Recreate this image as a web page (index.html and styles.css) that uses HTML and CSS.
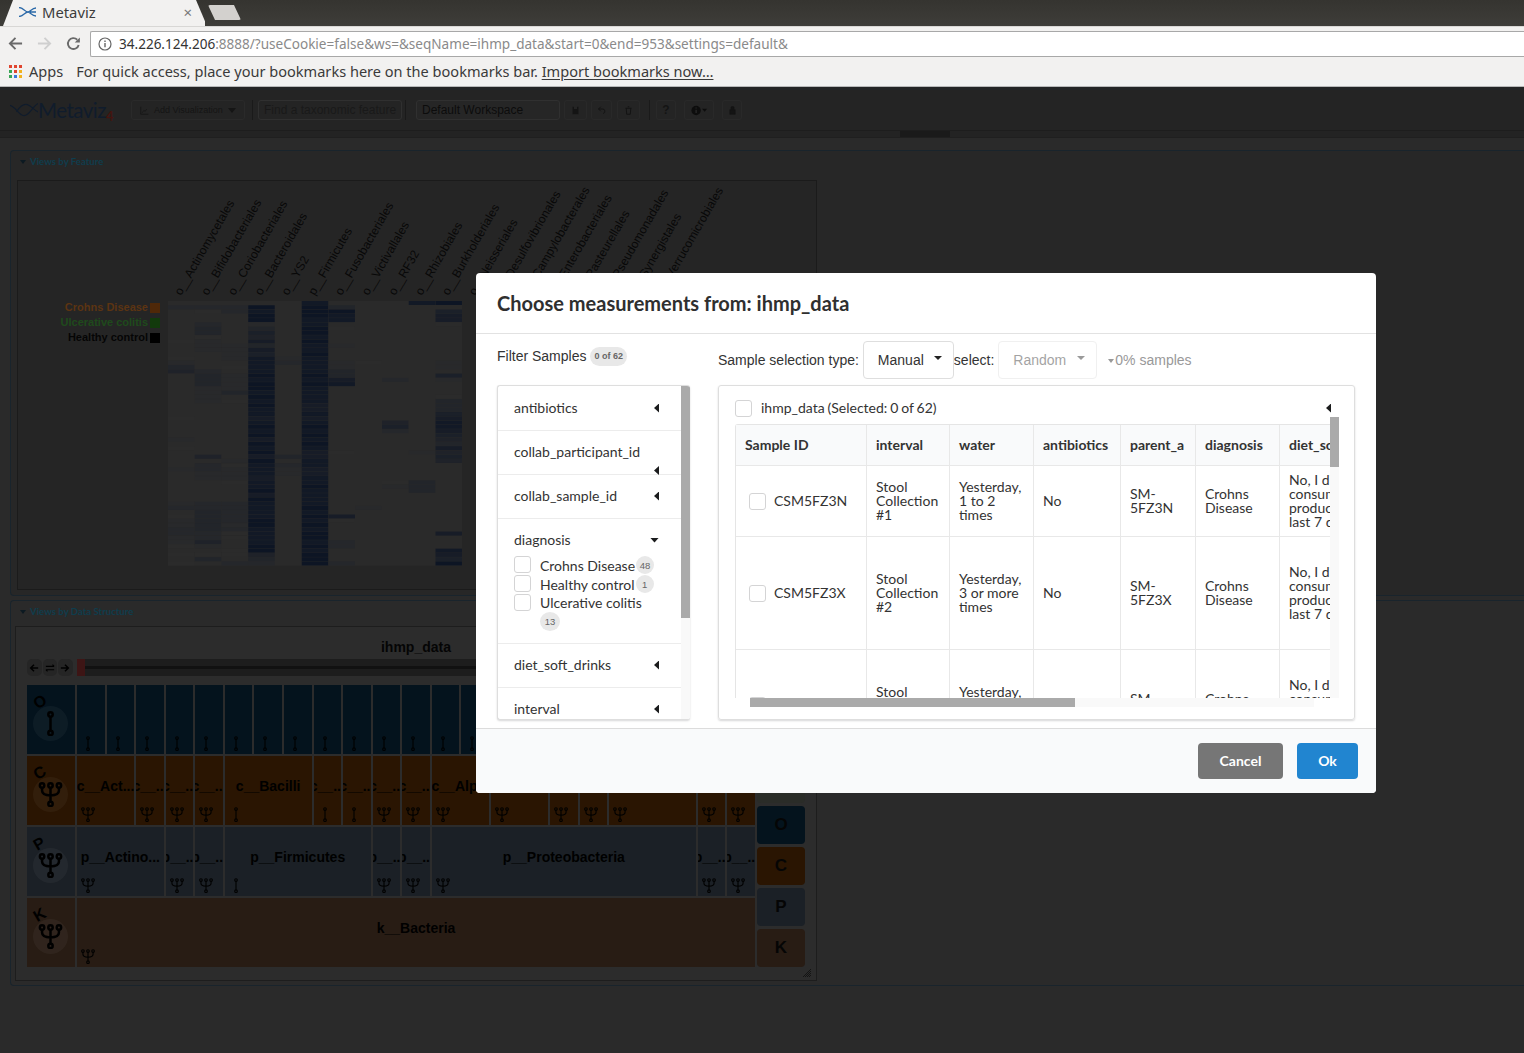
FILE: index.html
```html
<!DOCTYPE html>
<html lang="en">
<head>
<meta charset="utf-8">
<title>Metaviz</title>
<link rel="stylesheet" href="styles.css">
</head>
<body>
<svg class="defs" width="0" height="0" aria-hidden="true">
  <symbol id="psi" viewBox="0 0 16 16">
    <g fill="none" stroke="currentColor">
      <circle cx="2.6" cy="2.2" r="1.4"/><circle cx="8" cy="2.2" r="1.4"/><circle cx="13.4" cy="2.2" r="1.4"/><circle cx="8" cy="14" r="1.4"/>
      <path d="M8 3.6V12.6M2.6 3.6V5.5Q2.6 8.6 8 8.6Q13.4 8.6 13.4 5.5V3.6"/>
    </g>
  </symbol>
  <symbol id="bar" viewBox="0 0 16 16">
    <g fill="none" stroke="currentColor">
      <circle cx="8" cy="2.2" r="1.4"/><circle cx="8" cy="14" r="1.4"/><path d="M8 3.6V12.6"/>
    </g>
  </symbol>
</svg>

<header class="chrome">
  <div class="tabstrip">
    <div class="tab">
      <svg class="favicon" viewBox="0 0 18 10"><path d="M0 .5C4 .5 6 5 9 5C6 5 4 9.500 0 9.500M17 1C13 1 11 5 9 5C11 5 13 9 17 9M11 5H17" fill="none" stroke="#2b69a8" stroke-width="1.300"/></svg>
      <span class="tab-title">Metaviz</span>
      <span class="tab-close">×</span>
    </div>
    <div class="newtab"></div>
  </div>
  <div class="toolbar">
    <svg class="nav-ic" viewBox="0 0 16 16"><path d="M15 8H2M8 2L2 8l6 6" fill="none" stroke="#6a6a6a" stroke-width="2"/></svg>
    <svg class="nav-ic" viewBox="0 0 16 16"><path d="M1 8H14M8 2l6 6-6 6" fill="none" stroke="#cfcfcf" stroke-width="2"/></svg>
    <svg class="nav-ic" viewBox="0 0 16 16"><path d="M13.500 9.500A5.800 5.800 0 1 1 12 4" fill="none" stroke="#6a6a6a" stroke-width="2"/><path d="M14.800 1.500V7H9.300z" fill="#6a6a6a"/></svg>
    <div class="omnibox">
      <svg class="info" viewBox="0 0 14 14"><circle cx="7" cy="7" r="6" fill="none" stroke="#666" stroke-width="1.200"/><path d="M7 6v4.200M7 3.600v1.300" stroke="#666" stroke-width="1.400"/></svg>
      <span class="url"><b>34.226.124.206</b>:8888/?useCookie=false&amp;ws=&amp;seqName=ihmp_data&amp;start=0&amp;end=953&amp;settings=default&amp;</span>
    </div>
  </div>
  <div class="bookmarks">
    <svg class="apps" viewBox="0 0 13 13">
      <path fill="#e0452f" d="M0 0h3v3H0zM5 0h3v3H5zM10 0h3v3h-3z"/>
      <path fill="#3aa655" d="M0 5h3v3H0z"/><path fill="#e0452f" d="M5 5h3v3H5z"/><path fill="#f2b21c" d="M10 5h3v3h-3z"/>
      <path fill="#3aa655" d="M0 10h3v3H0z"/><path fill="#3a78d8" d="M5 10h3v3H5z"/><path fill="#f2b21c" d="M10 10h3v3h-3z"/>
    </svg>
    <span class="apps-label">Apps</span>
    <span class="bm-msg">For quick access, place your bookmarks here on the bookmarks bar. <u>Import bookmarks now…</u></span>
  </div>
</header>

<main class="app">
  <div class="app-header">
    <div class="logo">
      <svg class="logo-wave" viewBox="0 0 30 16"><path d="M0 3C7 5 9 14 15 14C21 14 24 4 30 1M7 10C10 5 14 2 17 2C22 2 25 8 30 10" fill="none" stroke="#101c2c" stroke-width="1.300"/></svg>
      <span class="logo-text">Metaviz</span><span class="logo-sub">4</span>
    </div>
    <div class="hbtn addviz">
      <svg class="hic" viewBox="0 0 12 12"><path d="M1 1v10h10M3 9l2-3 2 1 2-3" fill="none" stroke="#141414"/></svg>
      <span>Add Visualization</span><i class="hcaret"></i>
    </div>
    <i class="hsep first"></i>
    <div class="hinput">Find a taxonomic feature</div>
    <i class="hsep second"></i>
    <div class="hinput ws">Default Workspace</div>
    <div class="ibtn b1"><svg viewBox="0 0 12 12"><path d="M2 1h8v10H2zM4 1v3h4V1" fill="#141414"/></svg></div>
    <div class="ibtn b2"><svg viewBox="0 0 12 12"><path d="M5 1L2 4l3 3M2 4h5a3 3 0 0 1 1 6" fill="none" stroke="#141414" stroke-width="1.300"/></svg></div>
    <div class="ibtn b3"><svg viewBox="0 0 12 12"><path d="M2 3h8M3 3l.6 8h4.800L9 3M5 1h2" fill="none" stroke="#141414" stroke-width="1.300"/></svg></div>
    <i class="hsep third"></i>
    <div class="ibtn b4"><span>?</span></div>
    <div class="ibtn b5"><svg viewBox="0 0 20 12"><circle cx="6" cy="6" r="5.500" fill="#0d0d0d"/><path d="M6 5v4M6 2.500v1.200" stroke="#2a2a2a" stroke-width="1.500"/><path d="M13 4h6l-3 3.500z" fill="#0d0d0d"/></svg></div>
    <div class="ibtn b6"><svg viewBox="0 0 12 12"><path d="M4 5V2.500a2 2 0 0 1 4 0V5M2.500 5h7v6h-7z" fill="#141414" stroke="#141414"/></svg></div>
  </div>
  <div class="splitter"><i class="grab"></i></div>

  <section class="panel feature">
    <h2 class="panel-legend"><i class="legend-caret"></i>Views by Feature</h2>
    <div class="plot-box">
      <svg class="heatmap" id="heat" viewBox="18 181 798 408">
        <g class="legend-text">
          <text class="lg-c" x="148" y="311" text-anchor="end">Crohns Disease</text>
          <text class="lg-u" x="148" y="326" text-anchor="end">Ulcerative colitis</text>
          <text class="lg-h" x="148" y="341" text-anchor="end">Healthy control</text>
          <rect x="150" y="303" width="10" height="10" fill="#4f2808"/>
          <rect x="150" y="318" width="10" height="10" fill="#123a0c"/>
          <rect x="150" y="333" width="10" height="10" fill="#000"/>
        </g>
        <g class="axis" id="axis"></g>
        <g id="cells"></g>
      </svg>
    </div>
  </section>

  <section class="panel structure">
    <h2 class="panel-legend"><i class="legend-caret"></i>Views by Data Structure</h2>
    <div class="tm-box">
      <div class="tm-title">ihmp_data</div>
      <div class="tm-nav">
        <div class="tm-nav-btns">
          <span class="tm-nb"><svg viewBox="0 0 12 12"><path d="M11 6H2M6 2L2 6l4 4" fill="none" stroke="#000" stroke-width="1.800"/></svg></span>
          <span class="tm-nb"><svg viewBox="0 0 12 12"><path d="M1 4H11M1 8H11M9 2l2 2M3 10L1 8" fill="none" stroke="#000" stroke-width="1.300"/></svg></span>
          <span class="tm-nb"><svg viewBox="0 0 12 12"><path d="M1 6H10M6 2l4 4-4 4" fill="none" stroke="#000" stroke-width="1.800"/></svg></span>
        </div>
        <div class="tm-track"><i class="tm-line"></i><i class="tm-handle"></i></div>
      </div>
      <div class="tm-body">
        <div class="tm-grid">
          <div class="head o"><span class="head-letter">O</span><span class="head-badge"><svg><use href="#bar"/></svg></span></div>
          <div class="cell o"><svg><use href="#bar"/></svg></div><div class="cell o"><svg><use href="#bar"/></svg></div><div class="cell o"><svg><use href="#bar"/></svg></div><div class="cell o"><svg><use href="#bar"/></svg></div><div class="cell o"><svg><use href="#bar"/></svg></div><div class="cell o"><svg><use href="#bar"/></svg></div><div class="cell o"><svg><use href="#bar"/></svg></div><div class="cell o"><svg><use href="#bar"/></svg></div><div class="cell o"><svg><use href="#bar"/></svg></div><div class="cell o"><svg><use href="#bar"/></svg></div><div class="cell o"><svg><use href="#bar"/></svg></div><div class="cell o"><svg><use href="#bar"/></svg></div><div class="cell o"><svg><use href="#bar"/></svg></div><div class="cell o"><svg><use href="#bar"/></svg></div><div class="cell o"><svg><use href="#bar"/></svg></div><div class="cell o"><svg><use href="#bar"/></svg></div><div class="cell o"><svg><use href="#bar"/></svg></div><div class="cell o"><svg><use href="#bar"/></svg></div><div class="cell o"><svg><use href="#bar"/></svg></div><div class="cell o"><svg><use href="#bar"/></svg></div><div class="cell o"><svg><use href="#bar"/></svg></div><div class="cell o"><svg><use href="#bar"/></svg></div><div class="cell o"><svg><use href="#bar"/></svg></div>

          <div class="head c"><span class="head-letter">C</span><span class="head-badge"><svg><use href="#psi"/></svg></span></div>
          <div class="cell c s2"><span class="lbl">c__Act...</span><svg><use href="#psi"/></svg></div>
          <div class="cell c"><span class="lbl">c__...</span><svg><use href="#psi"/></svg></div>
          <div class="cell c"><span class="lbl">c__...</span><svg><use href="#psi"/></svg></div>
          <div class="cell c"><span class="lbl">c__...</span><svg><use href="#psi"/></svg></div>
          <div class="cell c s3"><span class="lbl">c__Bacilli</span><svg><use href="#bar"/></svg></div>
          <div class="cell c"><span class="lbl">c__...</span><svg><use href="#bar"/></svg></div>
          <div class="cell c"><span class="lbl">c__...</span><svg><use href="#bar"/></svg></div>
          <div class="cell c"><span class="lbl">c__...</span><svg><use href="#psi"/></svg></div>
          <div class="cell c"><span class="lbl">c__...</span><svg><use href="#psi"/></svg></div>
          <div class="cell c s2"><span class="lbl">c__Alp...</span><svg><use href="#psi"/></svg></div>
          <div class="cell c s2"><span class="lbl">c__Bet...</span><svg><use href="#psi"/></svg></div>
          <div class="cell c"><span class="lbl">c__...</span><svg><use href="#psi"/></svg></div>
          <div class="cell c"><span class="lbl">c__...</span><svg><use href="#psi"/></svg></div>
          <div class="cell c s3"><span class="lbl">c__Gamma...</span><svg><use href="#psi"/></svg></div>
          <div class="cell c"><svg><use href="#psi"/></svg></div>
          <div class="cell c"><svg><use href="#psi"/></svg></div>

          <div class="head p"><span class="head-letter">P</span><span class="head-badge"><svg><use href="#psi"/></svg></span></div>
          <div class="cell p s3"><span class="lbl">p__Actino...</span><svg><use href="#psi"/></svg></div>
          <div class="cell p"><span class="lbl">p__...</span><svg><use href="#psi"/></svg></div>
          <div class="cell p"><span class="lbl">p__...</span><svg><use href="#psi"/></svg></div>
          <div class="cell p s5"><span class="lbl">p__Firmicutes</span><svg class="firm"><use href="#bar"/></svg></div>
          <div class="cell p"><span class="lbl">p__...</span><svg><use href="#psi"/></svg></div>
          <div class="cell p"><span class="lbl">p__...</span><svg><use href="#psi"/></svg></div>
          <div class="cell p s9"><span class="lbl">p__Proteobacteria</span><svg><use href="#psi"/></svg></div>
          <div class="cell p"><span class="lbl">p__...</span><svg><use href="#psi"/></svg></div>
          <div class="cell p"><span class="lbl">p__...</span><svg><use href="#psi"/></svg></div>

          <div class="head k"><span class="head-letter">K</span><span class="head-badge"><svg><use href="#psi"/></svg></span></div>
          <div class="cell k s23"><span class="lbl">k__Bacteria</span><svg><use href="#psi"/></svg></div>
        </div>
        <div class="tm-side">
          <div class="side-btn f">F</div>
          <div class="side-btn o">O</div>
          <div class="side-btn c">C</div>
          <div class="side-btn p">P</div>
          <div class="side-btn k">K</div>
        </div>
        <svg class="grip" viewBox="0 0 8 8"><path d="M8 0L0 8M8 2L2 8M8 4L4 8M8 6L6 8" stroke="#0e0e0e" stroke-width=".8"/></svg>
      </div>
    </div>
  </section>
</main>

<div class="modal" role="dialog">
  <div class="modal-head">Choose measurements from: ihmp_data</div>
  <div class="modal-body">
    <div class="filter-col">
      <div class="filter-head"><span class="arial">Filter Samples</span><span class="count">0 of 62</span></div>
      <div class="acc">
        <div class="acc-item"><div class="acc-title"><span>antibiotics</span><i class="tri-left"></i></div></div>
        <div class="acc-item"><div class="acc-title"><span>collab_participant_id</span><i class="tri-left"></i></div></div>
        <div class="acc-item"><div class="acc-title"><span>collab_sample_id</span><i class="tri-left"></i></div></div>
        <div class="acc-item open">
          <div class="acc-title"><span>diagnosis</span><i class="tri-down"></i></div>
          <ul class="acc-list">
            <li><i class="check"></i><span class="opt">Crohns Disease<b class="pill">48</b></span></li>
            <li><i class="check"></i><span class="opt">Healthy control<b class="pill">1</b></span></li>
            <li><i class="check"></i><span class="opt">Ulcerative colitis<b class="pill wide">13</b></span></li>
          </ul>
        </div>
        <div class="acc-item"><div class="acc-title"><span>diet_soft_drinks</span><i class="tri-left"></i></div></div>
        <div class="acc-item"><div class="acc-title"><span>interval</span><i class="tri-left"></i></div></div>
        <i class="scroll-y acc-thumb"></i>
      </div>
    </div>
    <div class="sample-col">
      <div class="sel-row arial">
        <span>Sample selection type:</span>
        <div class="drop manual">Manual<i class="drop-caret"></i></div>
        <span>select:</span>
        <div class="drop random">Random<i class="drop-caret"></i></div>
        <span class="pct"><i class="pct-caret"></i>0% samples</span>
      </div>
      <div class="sample-card">
        <div class="card-head">
          <i class="check"></i><span class="card-title">ihmp_data (Selected: 0 of 62)</span><i class="tri-left"></i>
        </div>
        <div class="table-wrap">
          <table class="samples">
            <colgroup><col class="c-id"><col class="c-int"><col class="c-wat"><col class="c-ant"><col class="c-par"><col class="c-dia"><col class="c-die"></colgroup>
            <thead>
              <tr><th>Sample ID</th><th>interval</th><th>water</th><th>antibiotics</th><th>parent_a</th><th>diagnosis</th><th>diet_soft_drinks</th></tr>
            </thead>
            <tbody>
              <tr class="r1">
                <td><div class="id-cell"><i class="check"></i>CSM5FZ3N</div></td>
                <td>Stool Collection #1</td><td>Yesterday, 1 to 2 times</td><td>No</td><td>SM-5FZ3N</td><td>Crohns Disease</td><td>No, I did not consume these products in the last 7 days</td>
              </tr>
              <tr class="r2">
                <td><div class="id-cell"><i class="check"></i>CSM5FZ3X</div></td>
                <td>Stool Collection #2</td><td>Yesterday, 3 or more times</td><td>No</td><td>SM-5FZ3X</td><td>Crohns Disease</td><td>No, I did not consume these products in the last 7 days</td>
              </tr>
              <tr class="r3">
                <td><div class="id-cell"><i class="check"></i>CSM5MCU4</div></td>
                <td>Stool Collection #3</td><td>Yesterday, 3 or more times</td><td>No</td><td>SM-5MCU4</td><td>Crohns Disease</td><td>No, I did not consume these products in the last 7 days</td>
              </tr>
            </tbody>
          </table>
        </div>
        <i class="track-y"></i><i class="scroll-y table-thumb-y"></i>
        <i class="track-x"></i><i class="scroll-x"></i>
      </div>
    </div>
  </div>
  <div class="modal-foot">
    <button class="btn cancel">Cancel</button>
    <button class="btn ok">Ok</button>
  </div>
</div>
<script src="heatmap.js"></script>
</body>
</html>
```

FILE: styles.css
```css
* { box-sizing: border-box; }
html, body { margin: 0; padding: 0; }
body {
  position: relative;
  width: 1524px;
  height: 1053px;
  overflow: hidden;
  background: #2a2a2a;
  font-family: "Liberation Sans", Arial, sans-serif;
}
.defs { position: absolute; }

/* browser chrome */
.chrome { font-family: "Noto Sans", sans-serif; }
.tabstrip {
  display: flex;
  height: 26px;
  background: linear-gradient(#353430, #3e3d39);
}
.tab {
  display: flex;
  align-items: center;
  width: 205px;
  height: 26px;
  padding: 0 14px 3px 19px;
  background: #f2f1f0;
  clip-path: polygon(3px 100%, 13px 0, 196px 0, 207px 100%);
  font-size: 14.8px;
  color: #3c3c3c;
}
.favicon { width: 18px; height: 10px; margin-right: 5px; }
.tab-title { flex: 1; }
.tab-close { font-size: 15px; color: #777; margin-right: -1px; }
.newtab {
  width: 33px;
  height: 15px;
  margin: 5px 0 0 3px;
  background: #d3d1ce;
  clip-path: polygon(0 0, 26px 0, 100% 100%, 7px 100%);
  border-radius: 2px;
}
.toolbar {
  display: flex;
  align-items: center;
  height: 32px;
  padding: 2px 0 0 8px;
  background: #f2f1f0;
  border-top: 1px solid #d8d7d5;
}
.nav-ic { width: 15px; height: 15px; margin-right: 14px; flex: none; }
.nav-ic:nth-child(3) { margin-right: 9px; }
.omnibox {
  display: flex;
  align-items: center;
  flex: 1;
  height: 26px;
  background: #fff;
  border: 1px solid #a8a8a8;
  border-right: 0;
  border-radius: 2px 0 0 2px;
  padding-left: 7px;
}
.info { width: 14px; height: 14px; margin-right: 7px; }
.url { font-size: 13.55px; color: #8a8a8a; white-space: nowrap; }
.url b { font-weight: 400; color: #333; }
.bookmarks {
  display: flex;
  align-items: center;
  height: 29px;
  padding: 0 0 2px 9px;
  background: #f2f1f0;
  border-bottom: 1px solid #b8b8b8;
  font-size: 14.55px;
  color: #3a3a3a;
}
.apps { width: 13px; height: 13px; margin-right: 7px; }
.apps-label { margin-right: 13px; }
.bm-msg u { text-underline-offset: 2px; }

/* dimmed application */
.app-header {
  display: flex;
  align-items: center;
  height: 44px;
  padding: 3px 0 0 10px;
  background: #242424;
  border-bottom: 1px solid #1d1d1d;
  font-size: 12px;
  color: #101010;
}
.logo { display: flex; align-items: center; width: 111px; margin-right: 10px; height: 30px; }
.logo-wave { width: 28px; height: 16px; flex: none; }
.logo-text { font: 400 20.5px "Lato", sans-serif; color: #101c2c; letter-spacing: -.5px; }
.logo-sub { font: 700 13px "Lato", sans-serif; color: #45140f; margin-top: 12px; }
.hbtn {
  display: flex;
  align-items: center;
  width: 114px;
  height: 20px;
  padding-left: 8px;
  border: 1px solid #2a2a2a;
  border-radius: 3px;
  font-size: 9px;
  color: #141414;
}
.hic { width: 9px; height: 9px; margin-right: 5px; }
.hcaret {
  width: 0; height: 0; margin-left: 5px;
  border: 4px solid transparent; border-top: 5px solid #151515; border-bottom: 0;
}
.hsep { width: 1px; height: 20px; background: #1a1a1a; }
.hsep.first { margin: 0 5px 0 7px; }
.hsep.second { margin: 0 10px 0 3px; }
.hsep.third { margin: 0 6px 0 9px; }
.hinput {
  width: 144px;
  height: 20px;
  line-height: 18px;
  padding-left: 5px;
  border: 1px solid #303030;
  border-radius: 3px;
  color: #191919;
  white-space: nowrap;
}
.hinput.ws { color: #0c0c0c; background: #262626; }
.ibtn {
  display: flex;
  align-items: center;
  justify-content: center;
  height: 20px;
  border: 1px solid #292929;
  border-radius: 3px;
  font-weight: 700;
  color: #141414;
}
.ibtn svg { height: 9px; width: 9px; }
.b1 { width: 23px; margin-left: 4px; }
.b2 { width: 21px; margin-left: 4px; }
.b3 { width: 23px; margin-left: 5px; }
.b4 { width: 20px; }
.b5 { width: 30px; margin-left: 8px; }
.b5 svg { width: 17px; height: 11px; }
.b6 { width: 20px; margin-left: 8px; }
.splitter {
  height: 7px;
  margin-bottom: 12px;
  background: #232323;
  border-bottom: 1px solid #1f1f1f;
}
.grab { display: block; width: 50px; height: 6px; margin-left: 900px; background: #1a1a1a; }

.panel {
  margin-left: 10px;
  width: 1530px;
  background: #2a2a2a;
  border: 1px solid #19242c;
  border-right: 0;
  border-radius: 4px 0 0 4px;
}
.panel.feature { height: 446px; margin-bottom: 4px; padding: 0 0 0 6px; background: #272727; }
.panel.structure { height: 386px; padding: 0 0 0 4px; }
.panel-legend {
  display: flex;
  align-items: center;
  margin: 0;
  padding-left: 3px;
  height: 21px;
  font: 700 9.6px "Lato", sans-serif;
  color: #0f3d4d;
}
.legend-caret {
  width: 0; height: 0; margin-right: 4px;
  border: 3.5px solid transparent; border-top: 4px solid #0c1a22; border-bottom: 0;
}
.feature .panel-legend { margin-bottom: 8px; }
.structure .panel-legend { padding-left: 5px; margin-bottom: 4px; }
.plot-box {
  width: 800px;
  height: 410px;
  background: #252525;
  border: 1px solid #1b1b1b;
}
.heatmap { display: block; width: 798px; height: 408px; }
.legend-text { font: 700 11px "Liberation Sans", sans-serif; }
.lg-c { fill: #5c3412; }
.lg-u { fill: #1f4a1c; }
.lg-h { fill: #050505; }
.axis { font: 400 12px "Liberation Sans", sans-serif; fill: #080808; }

.tm-box {
  position: relative;
  width: 802px;
  height: 355px;
  padding: 9px 0 0 11px;
  background: #2c2c2c;
  border: 1px solid #1d1d1d;
}
.tm-title {
  width: 778px;
  height: 23px;
  font-size: 14px;
  font-weight: 700;
  line-height: 22px;
  text-align: center;
  color: #050505;
}
.tm-nav { display: flex; height: 17px; margin-bottom: 9px; }
.tm-nav-btns { display: flex; width: 50px; gap: 1px; }
.tm-nb {
  display: flex;
  align-items: center;
  justify-content: center;
  width: 14.5px;
  height: 17px;
  background: #252525;
  border-radius: 5px;
}
.tm-nb svg { width: 10px; height: 10px; }
.tm-track { position: relative; width: 678px; background: #1d1d1d; }
.tm-line { position: absolute; left: 4px; right: 0; top: 7px; height: 3px; background: #111; }
.tm-handle { position: absolute; left: 0; top: 0; width: 8px; height: 17px; background: #3d1515; }
.tm-body { display: flex; gap: 2px; }
.tm-grid {
  display: grid;
  grid-template-columns: 48px repeat(23, 1fr);
  grid-auto-rows: 69px;
  gap: 2px;
  width: 728px;
  flex: none;
}
.o { background: #04131d; }
.c { background: #2a1502; }
.p { background: #1b2026; }
.k { background: #281c14; }
.head { position: relative; }
.head-letter {
  position: absolute;
  left: 7px;
  top: 9px;
  font-size: 16px;
  font-weight: 700;
  line-height: 16px;
  color: #000;
  transform: rotate(-30deg);
}
.head-badge {
  position: absolute;
  left: 6px;
  top: 21px;
  display: flex;
  align-items: center;
  justify-content: center;
  width: 35px;
  height: 35px;
  border-radius: 50%;
  background: rgba(255, 255, 255, .04);
}
.head-badge svg { width: 25px; height: 25px; color: #000; stroke-width: 1.6; }
.cell {
  display: flex;
  flex-direction: column;
  min-width: 0;
  padding: 22px 0 3px 3px;
  color: #000;
  overflow: hidden;
}
.cell svg { flex: none; width: 16px; height: 15px; margin-top: auto; stroke-width: 1.2; }
.lbl {
  display: flex;
  justify-content: center;
  margin-left: -3px;
  padding: 0 3px;
  font-size: 14px;
  font-weight: 700;
  line-height: 16px;
  white-space: nowrap;
  overflow: hidden;
}
.s2 { grid-column: span 2; }
.s3 { grid-column: span 3; }
.s5 { grid-column: span 5; }
.s9 { grid-column: span 9; }
.s23 { grid-column: span 23; }
.tm-side {
  display: flex;
  flex-direction: column;
  justify-content: flex-end;
  gap: 2.5px;
  width: 48px;
  height: 283px;
  padding-bottom: 1px;
}
.side-btn {
  flex: none;
  height: 38.5px;
  line-height: 38px;
  text-align: center;
  font-size: 17px;
  font-weight: 700;
  color: #050505;
  border-radius: 4px;
}
.side-btn.f { background: #2a2c28; }
.grip { position: absolute; left: 787px; top: 342px; width: 8px; height: 8px; }

/* modal */
.modal {
  position: absolute;
  left: 476px;
  top: 273px;
  width: 900px;
  height: 520px;
  display: flex;
  flex-direction: column;
  background: #fff;
  border-radius: 4px;
  font-family: "Lato", sans-serif;
  font-size: 14px;
  color: #333;
}
.arial { font-family: "Liberation Sans", Arial, sans-serif; }
.modal-head {
  height: 61px;
  padding: 0 21px;
  line-height: 61px;
  font-size: 20px;
  font-weight: 700;
  color: #2f2f2f;
  border-bottom: 1px solid #e2e2e2;
}
.modal-body {
  display: flex;
  flex: 1;
  min-height: 0;
  padding: 0 21px;
  gap: 28px;
}
.filter-col { width: 193px; flex: none; }
.filter-head {
  display: flex;
  align-items: center;
  height: 43px;
  margin-bottom: 8px;
  font-size: 14px;
}
.count {
  margin-left: 4px;
  margin-top: 2px;
  padding: 0 4px;
  height: 19px;
  background: #e8e8e8;
  border-radius: 10px;
  font: 700 9px "Liberation Sans", sans-serif;
  line-height: 19px;
  color: #666;
}
.acc {
  position: relative;
  height: 335px;
  padding-top: 1px;
  overflow: hidden;
  background: #fff;
  border: 1px solid #dedede;
  border-right: 0;
  border-radius: 3px;
  box-shadow: 0 1px 2px rgba(34, 36, 38, .18);
}
.acc::after {
  content: "";
  position: absolute;
  right: 0; top: 0; bottom: 0;
  width: 9px;
  background: #f9f9f9;
}
.acc-item {
  width: 183px;
  padding: 12px 22px 13px 16px;
  border-bottom: 1px solid #ececec;
}
.acc-item.open { padding-bottom: 12px; }
.acc-title {
  display: flex;
  flex-wrap: wrap;
  justify-content: space-between;
  align-items: center;
  height: 18px;
  line-height: 18px;
  font-size: 14px;
}
.tri-left {
  display: block;
  width: 22px;
  height: 9px;
  background: #1b1c1d;
  clip-path: polygon(100% 0, 100% 100%, 17px 50%);
}
.acc-item:nth-child(2) .acc-title { align-content: flex-start; }
.acc-item:nth-child(2) .tri-left { margin: 5px 0 0 auto; }
.tri-down {
  display: block;
  width: 9px;
  height: 5px;
  background: #1b1c1d;
  clip-path: polygon(0 0, 100% 0, 50% 100%);
}
.acc-list { list-style: none; margin: 7px 0 0; padding: 0; }
.acc-list li { display: flex; min-height: 19px; }
.check {
  display: block;
  flex: none;
  width: 17px;
  height: 17px;
  background: #fff;
  border: 1px solid #d4d4d5;
  border-radius: 3px;
}
.opt {
  display: flex;
  flex-wrap: wrap;
  align-items: center;
  flex: 1;
  min-width: 0;
  margin: -1px 0 0 9px;
  line-height: 19px;
}
.pill {
  display: block;
  min-width: 18px;
  height: 18px;
  margin-left: 1px;
  text-align: center;
  font: 400 9.5px "Liberation Sans", sans-serif;
  line-height: 19px;
  color: #666;
  background: #e8e8e8;
  border-radius: 50%;
}
.pill.wide { min-width: 20px; height: 19px; margin-left: 0; }
.scroll-y, .scroll-x, .track-x, .track-y { position: absolute; display: block; }
.scroll-y { z-index: 2; width: 9px; background: #aaa; }
.acc-thumb { right: 0; top: 0; height: 232px; }

.sample-col { flex: 1; min-width: 0; }
.sel-row {
  display: flex;
  align-items: center;
  height: 51px;
  font-size: 14px;
  color: #333;
}
.drop {
  position: relative;
  height: 38px;
  line-height: 36px;
  margin-left: 4px;
  padding-left: 14px;
  background: #fff;
  border: 1px solid #dedede;
  border-radius: 4px;
}
.drop.manual { width: 91px; margin-right: 0; }
.drop.random { width: 99px; margin-left: 4px; margin-right: 11px; opacity: .45; }
.drop-caret {
  position: absolute;
  right: 11px; top: 14px;
  width: 0; height: 0;
  border: 4px solid transparent; border-top: 4px solid #222; border-bottom: 0;
}
.pct { color: #999; }
.pct-caret {
  display: inline-block;
  width: 0; height: 0; margin-right: 1px; vertical-align: 2px;
  border: 3.5px solid transparent; border-top: 4px solid #999; border-bottom: 0;
}
.sample-card {
  position: relative;
  height: 335px;
  padding: 13px 0 0 16px;
  border: 1px solid #dedede;
  border-radius: 3px;
  box-shadow: 0 1px 2px rgba(34, 36, 38, .18);
}
.card-head { display: flex; align-items: center; height: 18px; width: 595px; margin-bottom: 7px; }
.card-title { margin: -2px 0 0 9px; flex: 1; word-spacing: -.7px; }
.card-head .tri-left { width: 5px; clip-path: polygon(100% 0, 100% 100%, 0 50%); margin-right: -1px; }
.table-wrap {
  width: 595px;
  height: 274px;
  overflow: hidden;
}
.samples {
  table-layout: fixed;
  width: 674px;
  border-collapse: separate;
  border-spacing: 0;
  line-height: 14px;
  border-top: 1px solid #e5e5e5;
  border-left: 1px solid #e5e5e5;
  border-top-left-radius: 3px;
}
.c-id { width: 131px; }
.c-int { width: 83px; }
.c-wat { width: 84px; }
.c-ant { width: 87px; }
.c-par { width: 75px; }
.c-dia { width: 84px; }
.c-die { width: 130px; }
.samples th {
  height: 41px;
  padding: 0 9px;
  text-align: left;
  font-weight: 700;
  background: #f9fafb;
  border-right: 1px solid #e8e8e8;
  border-bottom: 1px solid #e8e8e8;
  white-space: nowrap;
  overflow: hidden;
}
.samples td {
  padding: 0 9px;
  border-right: 1px solid #e8e8e8;
  border-bottom: 1px solid #e8e8e8;
}
.r1 td { height: 71px; }
.r2 td { height: 113px; }
.r3 td { height: 112px; }
.id-cell { display: flex; align-items: center; padding-left: 4px; }
.id-cell .check { margin-right: 8px; }
.track-y { left: 611px; top: 31px; width: 9px; height: 281px; background: #f9f9f9; }
.track-x { left: 31px; top: 312px; width: 564px; height: 9px; background: #f9f9f9; }
.table-thumb-y { left: 611px; top: 31px; height: 50px; }
.scroll-x { left: 31px; top: 312px; width: 325px; height: 9px; background: #aaa; }

.modal-foot {
  display: flex;
  justify-content: flex-end;
  align-items: flex-start;
  gap: 14px;
  height: 65px;
  padding: 14px 18px 0 0;
  background: #f9fafb;
  border-top: 1px solid #dcdcdc;
  border-radius: 0 0 4px 4px;
}
.btn {
  height: 36px;
  padding: 0 0 2px;
  border: 0;
  border-radius: 4px;
  font: 700 14px "Lato", sans-serif;
  color: #fff;
}
.cancel { width: 85px; background: #767676; }
.ok { width: 61px; background: #2185d0; }
```

FILE: heatmap.js
```javascript
(function () {
  var NS = "http://www.w3.org/2000/svg";
  var names = ["o__Actinomycetales", "o__Bifidobacteriales", "o__Coriobacteriales", "o__Bacteroidales", "o__YS2", "p__Firmicutes", "o__Fusobacteriales", "o__Victivallales", "o__RF32", "o__Rhizobiales", "o__Burkholderiales", "o__Neisseriales", "o__Desulfovibrionales", "o__Campylobacterales", "o__Enterobacteriales", "o__Pasteurellales", "o__Pseudomonadales", "o__Synergistales", "o__Verrucomicrobiales"];
  var columns = [
    "03000000010001245000000000010000201000020000000230122332210101",
    "03100344122200003444222200000000000050332200000334444433520140",
    "03300000002222010222240100000000000002122210000333332311001103",
    "09899246574768888989989898878989798979888788979888899888899543",
    "00000000000002300000000000000000000040322000000000000000000000",
    "89998899898898888989888877878989898778877889888898989899898999",
    "04988010002000224478000000000000000100000000000000710000330003",
    "00000000000000100000000000000000000000000000000020000000000000",
    "00000000000000000030000000005630000000000012000000000000000000",
    "80000000000000000000000000000000000200000044400000000000000000",
    "90677100000000220620001444678876547565000000000000000070008769"
  ];
  var palette = ["", "#2b2b2b", "#28292b", "#25272b", "#22252a", "#1f2229", "#1b2029", "#171c27", "#121926", "#0d1524"];
  var cells = document.getElementById("cells");
  var axis = document.getElementById("axis");
  var pitch = 26.75, left = 168, top = 301, rowH = 4.27;

  var base = document.createElementNS(NS, "rect");
  base.setAttribute("x", left);
  base.setAttribute("y", top);
  base.setAttribute("width", pitch * 11);
  base.setAttribute("height", rowH * 62);
  base.setAttribute("fill", "#2a2a2a");
  cells.appendChild(base);

  columns.forEach(function (col, c) {
    for (var i = 0; i < col.length; i++) {
      var v = +col.charAt(i);
      if (!v) continue;
      var r = document.createElementNS(NS, "rect");
      r.setAttribute("x", left + pitch * c);
      r.setAttribute("y", top + rowH * i);
      r.setAttribute("width", pitch - 0.3);
      r.setAttribute("height", rowH - 0.3);
      r.setAttribute("fill", palette[v]);
      cells.appendChild(r);
    }
  });

  names.forEach(function (name, c) {
    var t = document.createElementNS(NS, "text");
    var x = 181 + pitch * c, y = 296;
    t.setAttribute("x", x);
    t.setAttribute("y", y);
    t.setAttribute("transform", "rotate(-60 " + x + " " + y + ")");
    t.textContent = name;
    axis.appendChild(t);
  });
})();
```
